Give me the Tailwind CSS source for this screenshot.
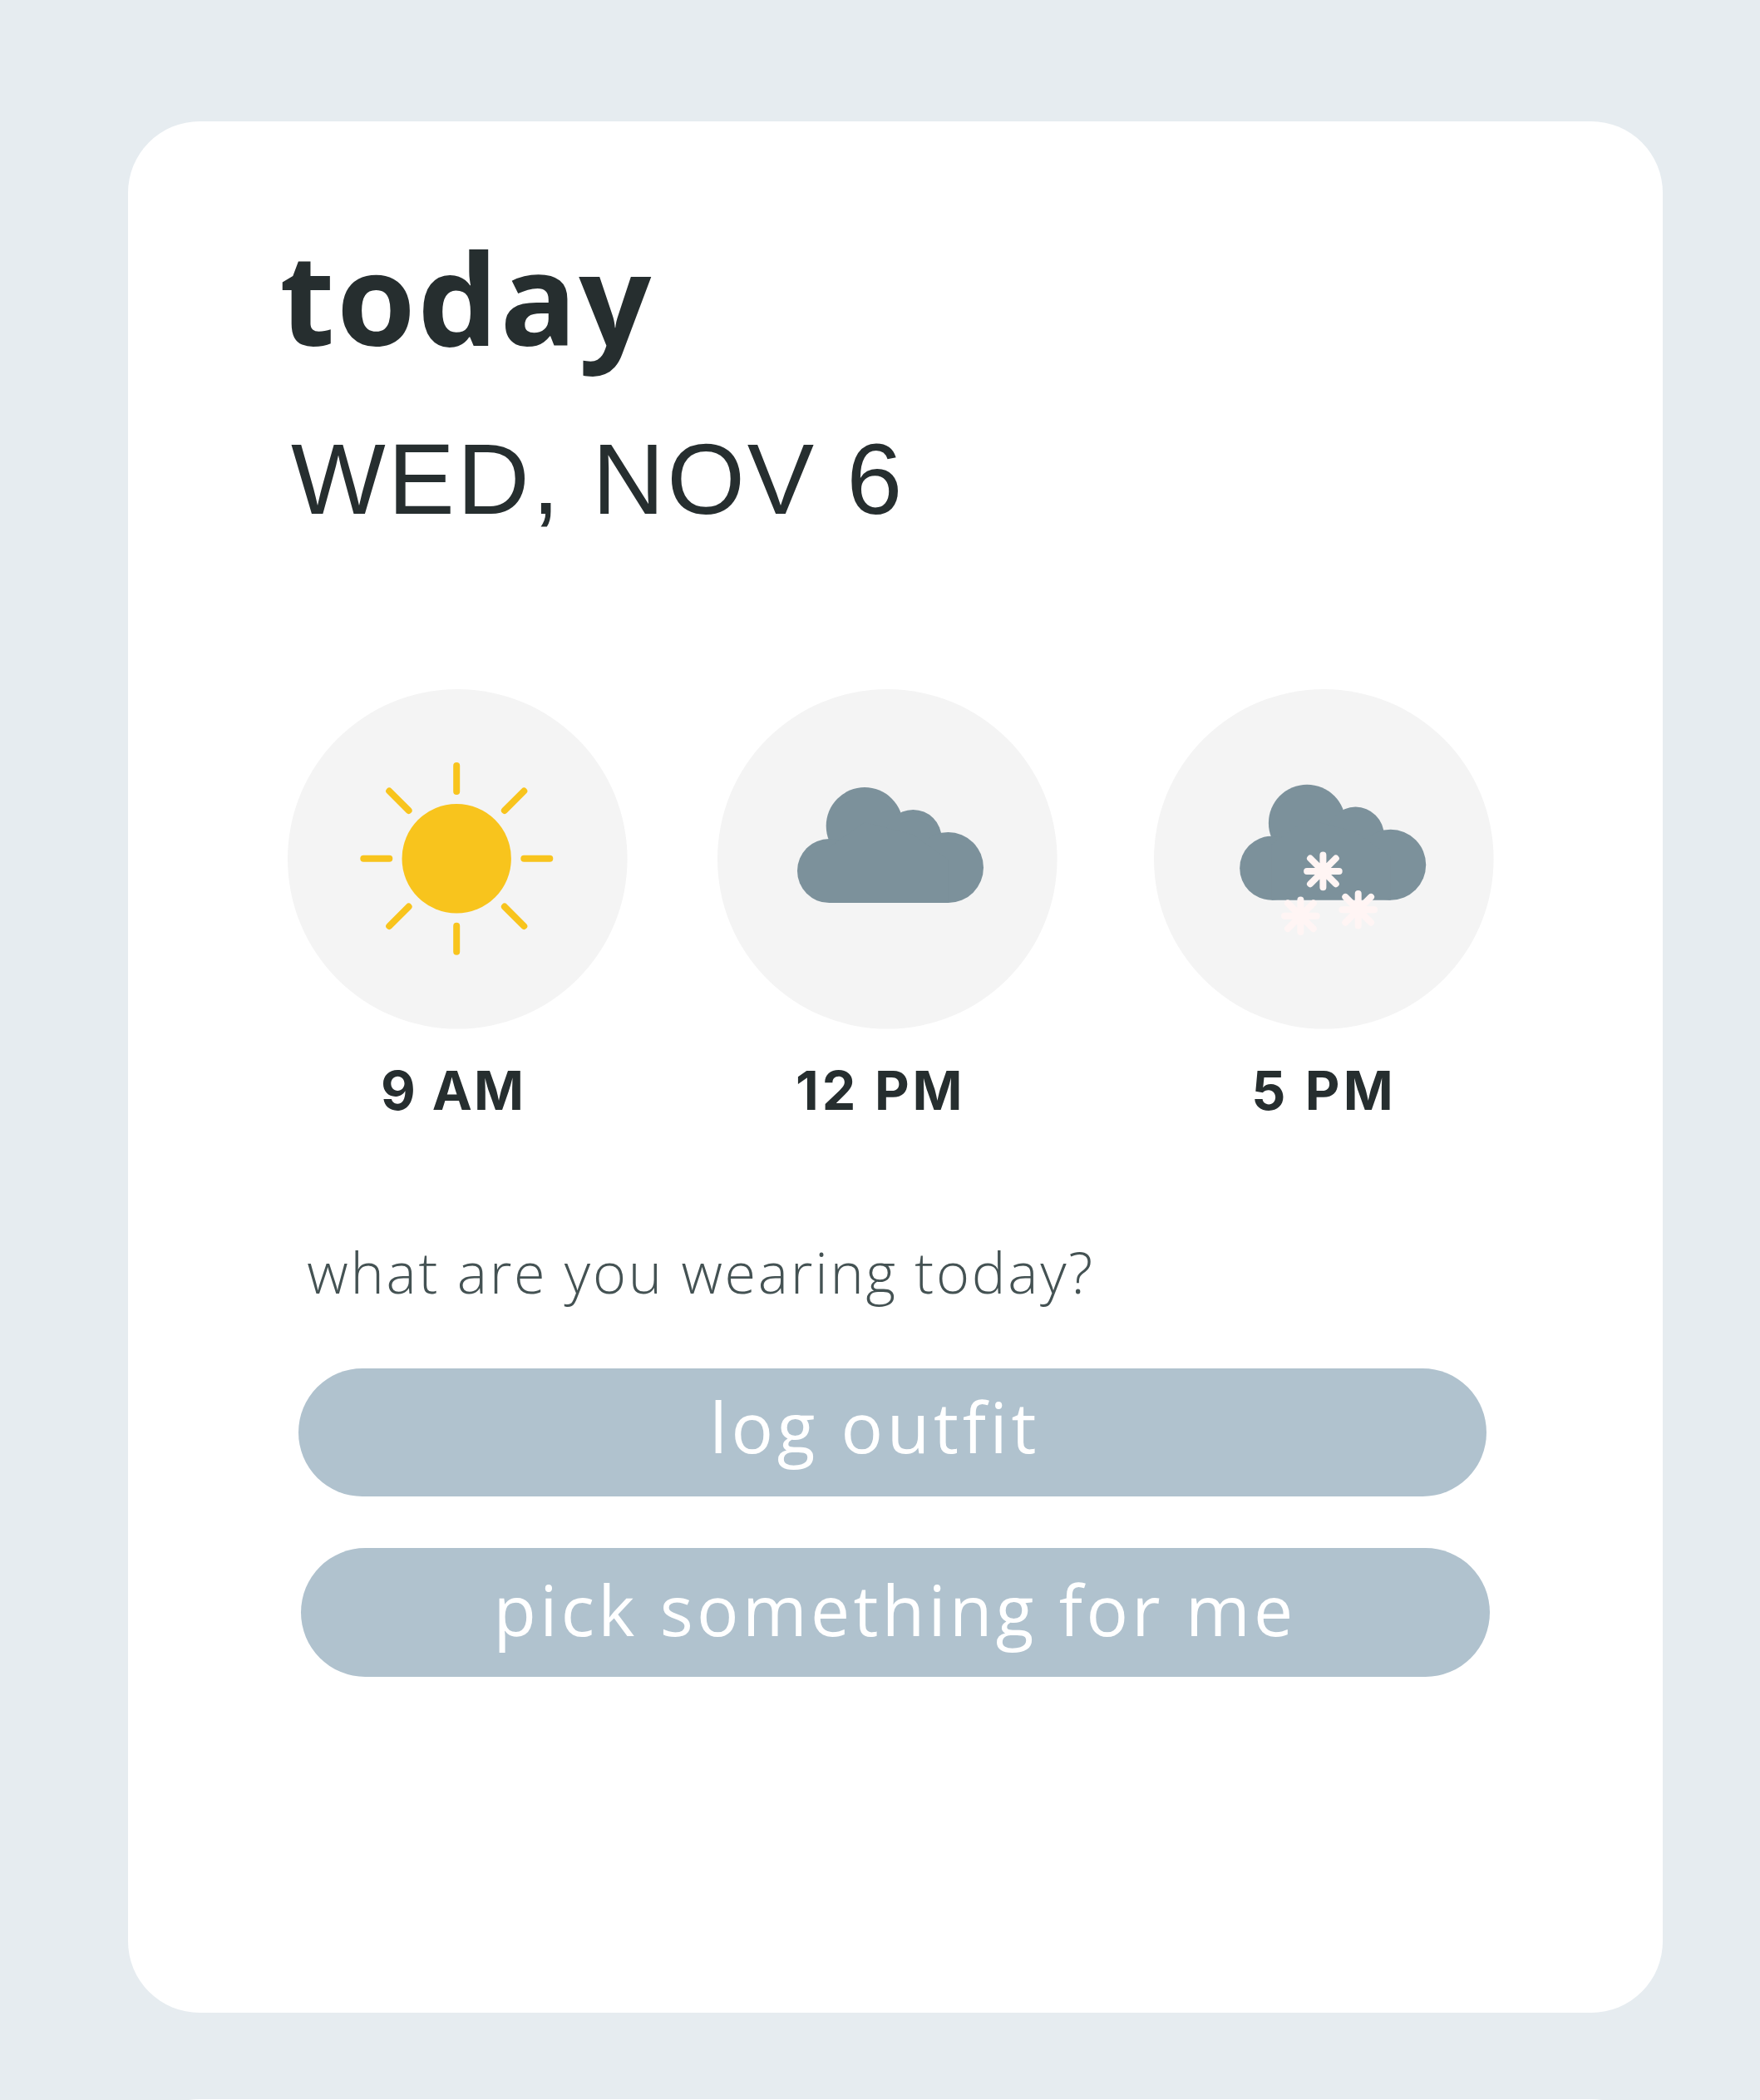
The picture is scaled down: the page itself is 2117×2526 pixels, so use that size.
<!DOCTYPE html>
<html lang="en">
<head>
<meta charset="utf-8">
<title>today</title>
<script src="https://cdn.jsdelivr.net/npm/@tailwindcss/browser@4"></script>
</head>
<body class="h-[2526px] w-[2117px] overflow-hidden bg-[#e6ecf0] pl-[154.3px] pt-[146.3px] text-[#262e2f]">
  <main class="flex h-[2275px] w-[1845.8px] flex-col items-start rounded-[86px] bg-white pt-[106px]">
    <h1 class="ml-[182px] whitespace-nowrap font-['Open_Sans',sans-serif] text-[153px] font-bold leading-[209px] tracking-[2.41px]">today</h1>
    <p class="ml-[195.7px] mt-[47px] whitespace-nowrap font-['Liberation_Sans',sans-serif] text-[120.5px] leading-[137px] tracking-[2.84px]">WED, NOV 6</p>

    <section class="ml-[191.7px] mt-[183.7px] flex font-['Inter',sans-serif] text-[64.4px] font-[650] leading-[78px]">
      <div class="w-[408.6px]">
        <svg class="block size-[408.6px]" viewBox="0 0 408.6 408.6">
          <circle cx="204.3" cy="204.3" r="204.3" fill="#f4f4f4"/>
          <circle cx="203.2" cy="203.8" r="65.7" fill="#f8c41d"/>
          <path d="M203.2 92v31M203.2 284.8v31M91.3 203.8h31M284.3 203.8h31M122.2 122.5l23.4 23.4M284.3 122.5l-23.4 23.4M122.2 285l23.4-23.4M284.3 285l-23.4-23.4" fill="none" stroke="#f8c41d" stroke-width="8" stroke-linecap="round"/>
        </svg>
        <p class="mt-[35px] whitespace-nowrap pl-[112px] tracking-[2.3px]">9 AM</p>
      </div>
      <div class="ml-[108.5px] w-[408.6px]">
        <svg class="block size-[408.6px]" viewBox="0 0 408.6 408.6">
          <circle cx="204.3" cy="204.3" r="204.3" fill="#f4f4f4"/>
          <g id="cloud" fill="#7c919b">
            <circle cx="177" cy="164.4" r="46.3"/>
            <circle cx="235.3" cy="179.3" r="34.3"/>
            <circle cx="134.5" cy="218.6" r="38.5"/>
            <circle cx="277.5" cy="214.6" r="42.5"/>
            <path d="M134.5 257.1V190l42.5-30 58 15 42.5 30v52.1z"/>
          </g>
        </svg>
        <p class="mt-[35px] whitespace-nowrap pl-[94px] tracking-[3.8px]">12 PM</p>
      </div>
      <div class="ml-[116.6px] w-[408.6px]">
        <svg class="block size-[408.6px]" viewBox="0 0 408.6 408.6">
          <defs>
            <path id="flake" d="M0-19.3v38.6M-19.3 0h38.6M-15.4-15.4l30.8 30.8M-15.4 15.4l30.8-30.8"/>
          </defs>
          <circle cx="204.3" cy="204.3" r="204.3" fill="#f4f4f4"/>
          <use href="#cloud" x="7.2" y="-3.4"/>
          <g fill="none" stroke="#fff5f4" stroke-width="8" stroke-linecap="round">
            <use href="#flake" x="203.4" y="218.9"/>
            <use href="#flake" x="176.4" y="272.8"/>
            <use href="#flake" x="245.7" y="265.3"/>
          </g>
        </svg>
        <p class="mt-[35px] whitespace-nowrap pl-[117px] tracking-[4.1px]">5 PM</p>
      </div>
    </section>

    <p class="ml-[215px] mt-[132.4px] whitespace-nowrap font-['Open_Sans',sans-serif] text-[68.4px] font-light leading-[93px] tracking-[2.74px] text-[#445253]">what are you wearing today?</p>

    <button class="ml-[204.3px] mt-[70px] block h-[154.4px] w-[1429.4px] whitespace-nowrap rounded-full bg-[#b0c2ce] pb-[16px] pl-[495px] text-left font-['Open_Sans',sans-serif] text-[84px] leading-[115px] tracking-[4.7px] text-white">log outfit</button>
    <button class="ml-[208.2px] mt-[62.1px] block h-[154.4px] w-[1429.4px] whitespace-nowrap rounded-full bg-[#b0c2ce] pb-[8px] pl-[231px] text-left font-['Open_Sans',sans-serif] text-[84px] leading-[115px] tracking-[4.3px] text-white">pick something for me</button>
  </main>
  <section class="mt-[103.8px] h-[300px] w-[1845.8px] rounded-[86px] bg-white"></section>
</body>
</html>
